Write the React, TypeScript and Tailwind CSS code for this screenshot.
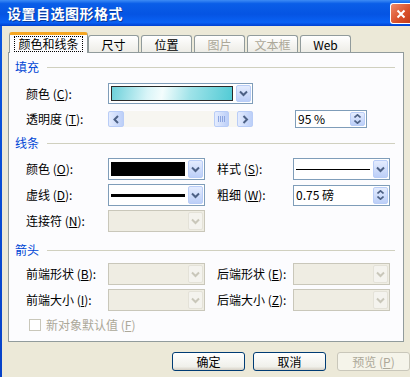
const font = "font-['SimSun','Noto_Sans_CJK_SC',sans-serif]";

function Chevron({ disabled, dir = 'down' }: { disabled?: boolean; dir?: 'down' | 'left' | 'right' }) {
  const d = dir === 'down' ? 'M1 1.5 L4.5 5 L8 1.5' : dir === 'left' ? 'M5 1 L1.5 4.5 L5 8' : 'M1.5 1 L5 4.5 L1.5 8';
  const size = dir === 'down' ? 'w-[9px] h-[7px]' : 'w-[7px] h-[9px]';
  return (
    <svg viewBox={dir === 'down' ? '0 0 9 7' : '0 0 7 9'} className={size}>
      <path d={d} fill="none" stroke={disabled ? '#c9c7ba' : '#4d6185'} strokeWidth="2" />
    </svg>
  );
}

function DropBtn({ disabled }: { disabled?: boolean }) {
  return (
    <div
      className={`w-[15px] self-stretch m-px rounded-[2px] flex items-center justify-center border ${
        disabled
          ? 'border-[#e4e2d8] bg-[#f4f3ee]'
          : 'border-[#b9cdf7] bg-[linear-gradient(180deg,#e4ecfe,#bccff8)]'
      }`}
    >
      <Chevron disabled={disabled} />
    </div>
  );
}

function SpinBtn() {
  return (
    <div className="w-[15px] self-stretch m-px rounded-[2px] flex flex-col items-center justify-center gap-[2px] border border-[#b9cdf7] bg-[linear-gradient(180deg,#e4ecfe,#bccff8)]">
      <svg viewBox="0 0 7 4" className="w-[7px] h-[4px]">
        <path d="M0.5 3.5 L3.5 0.8 L6.5 3.5" fill="none" stroke="#4d6185" strokeWidth="1.6" />
      </svg>
      <svg viewBox="0 0 7 4" className="w-[7px] h-[4px]">
        <path d="M0.5 0.5 L3.5 3.2 L6.5 0.5" fill="none" stroke="#4d6185" strokeWidth="1.6" />
      </svg>
    </div>
  );
}

function Label({ text, k, w = 'w-[82px]', disabled }: { text: string; k: string; w?: string; disabled?: boolean }) {
  return (
    <div className={`${w} shrink-0 text-[12px] leading-none whitespace-nowrap ${disabled ? 'text-[#aca899]' : 'text-black'}`}>
      {text} (<u>{k}</u>):
    </div>
  );
}

function Heading({ text }: { text: string }) {
  return (
    <div className="h-[14px] flex items-center pl-[6px] pr-[8px]">
      <span className="text-[12px] leading-none text-[#0046d5]">{text}</span>
      <div className="flex-1 h-px bg-[#d0d0bf] ml-[8px]" />
    </div>
  );
}

function Combo({ children, disabled }: { children?: React.ReactNode; disabled?: boolean }) {
  return (
    <div
      className={`w-[97px] h-[22px] flex border ${
        disabled ? 'border-[#c9c7ba] bg-[#efede3]' : 'border-[#7f9db9] bg-white'
      }`}
    >
      <div className="flex-1 flex items-center px-[2px]">{children}</div>
      <DropBtn disabled={disabled} />
    </div>
  );
}

function Tab({ text, active, disabled }: { text: string; active?: boolean; disabled?: boolean }) {
  if (active) {
    return (
      <div className="relative z-10 w-[79px] h-[21px] bg-[#fcfcfe] border-x border-[#919b9c] border-t-[3px] border-t-[#f5a623] rounded-t-[3px] flex items-start justify-center pt-[2px]">
        <span className="text-[12px] leading-none px-[3px] py-[1px] outline outline-1 outline-dotted outline-black">颜色和线条</span>
      </div>
    );
  }
  return (
    <div
      className={`w-[51px] h-[18px] border-x border-t border-[#919b9c] rounded-t-[3px] bg-[linear-gradient(180deg,#ffffff,#ecebe5)] flex items-center justify-center text-[12px] leading-none ${
        disabled ? 'text-[#aca899]' : 'text-black'
      }`}
    >
      {text}
    </div>
  );
}

function Button({ text, disabled }: { text: React.ReactNode; disabled?: boolean }) {
  return (
    <div
      className={`w-[73px] h-[19px] rounded-[3px] border flex items-center justify-center text-[12px] leading-none ${
        disabled
          ? 'border-[#c9c7ba] bg-[#f5f4ea] text-[#aca899]'
          : 'border-[#003c74] bg-[linear-gradient(180deg,#ffffff,#f0f0ea_80%,#d6d0c5)] text-black'
      }`}
    >
      {text}
    </div>
  );
}

export default function App() {
  return (
    <div className={`w-[410px] h-[377px] overflow-hidden bg-[#ece9d8] flex flex-col ${font}`}>
      {/* title bar */}
      <div className="h-[26px] shrink-0 flex items-center justify-between pl-[7px] bg-[linear-gradient(180deg,#3d8cf5_0%,#0a5ee8_14%,#0554e3_55%,#0a62f5_86%,#0040d0_100%)]">
        <span className="text-[14px] font-bold text-white leading-none tracking-[0.5px] [text-shadow:1px_1px_0_#0a3a9a]">
          设置自选图形格式
        </span>
        <div className="w-[20px] h-[21px] mt-[1px] rounded-l-[3px] border border-r-0 border-white bg-[linear-gradient(135deg,#f08a6a,#d9502a_60%,#c23c1a)] flex items-center justify-center">
          <svg viewBox="0 0 10 10" className="w-[10px] h-[10px]">
            <path d="M1.5 1.5 L8.5 8.5 M8.5 1.5 L1.5 8.5" stroke="white" strokeWidth="2" />
          </svg>
        </div>
      </div>

      <div className="flex-1 flex">
        <div className="w-[3px] bg-[linear-gradient(180deg,#0a56e0,#0842c8)]" />
        <div className="flex-1 flex flex-col pl-[6px] pt-[6px]">
          {/* tabs */}
          <div className="h-[21px] flex items-end pl-px gap-[2px]">
            <div className="-mr-[2px] self-stretch flex">
              <Tab text="颜色和线条" active />
            </div>
            <Tab text="尺寸" />
            <Tab text="位置" />
            <Tab text="图片" disabled />
            <Tab text="文本框" disabled />
            <Tab text="Web" />
          </div>

          {/* panel */}
          <div className="-mt-px w-[396px] h-[290px] border border-[#919b9c] bg-[#fcfcfe] flex flex-col pt-[7px]">
            <Heading text="填充" />
            <div className="mt-[9px] h-[21px] flex items-center pl-[17px]">
              <Label text="颜色" k="C" />
              <div className="w-[145px] h-[21px] flex border border-[#7f9db9] bg-white">
                <div className="flex-1 p-[2px]">
                  <div className="w-full h-full border border-[#2a2a2a] bg-[linear-gradient(100deg,#6cd0da_0%,#d9f5f8_30%,#f4fdfd_42%,#9fe3e9_65%,#52cbd5_100%)]" />
                </div>
                <DropBtn />
              </div>
            </div>
            <div className="mt-[6px] h-[18px] flex items-center pl-[17px]">
              <Label text="透明度" k="T" />
              <div className="w-[145px] h-[16px] flex items-stretch bg-[#f7f6f1]">
                <div className="w-[16px] rounded-[2px] border border-[#b9cdf7] bg-[linear-gradient(90deg,#e4ecfe,#bccff8)] flex items-center justify-center">
                  <Chevron dir="left" />
                </div>
                <div className="flex-1" />
                <div className="w-[15px] rounded-[2px] border border-[#b9cdf7] bg-[linear-gradient(90deg,#e4ecfe,#bccff8)] flex items-center justify-center gap-[1px]">
                  <div className="w-px h-[6px] bg-[#8ca5e0]" />
                  <div className="w-px h-[6px] bg-[#8ca5e0]" />
                  <div className="w-px h-[6px] bg-[#8ca5e0]" />
                  <div className="w-px h-[6px] bg-[#8ca5e0]" />
                </div>
                <div className="w-[8px]" />
                <div className="w-[16px] rounded-[2px] border border-[#b9cdf7] bg-[linear-gradient(90deg,#e4ecfe,#bccff8)] flex items-center justify-center">
                  <Chevron dir="right" />
                </div>
              </div>
              <div className="ml-[42px] w-[72px] h-[18px] flex border border-[#7f9db9] bg-white">
                <div className="flex-1 flex items-center pl-[2px] text-[12px] leading-none whitespace-pre">95 %</div>
                <SpinBtn />
              </div>
            </div>

            <div className="mt-[8px]">
              <Heading text="线条" />
            </div>
            <div className="mt-[8px] h-[22px] flex items-center pl-[17px]">
              <Label text="颜色" k="O" />
              <Combo>
                <div className="w-full h-[14px] bg-black" />
              </Combo>
              <div className="ml-[12px]">
                <Label text="样式" k="S" w="w-[76px]" />
              </div>
              <Combo>
                <div className="w-full h-px bg-black" />
              </Combo>
            </div>
            <div className="mt-[4px] h-[22px] flex items-center pl-[17px]">
              <Label text="虚线" k="D" />
              <Combo>
                <div className="w-full h-[3px] bg-black" />
              </Combo>
              <div className="ml-[12px]">
                <Label text="粗细" k="W" w="w-[76px]" />
              </div>
              <div className="w-[97px] h-[21px] flex border border-[#7f9db9] bg-white">
                <div className="flex-1 flex items-center pl-[2px] text-[12px] leading-none whitespace-pre">0.75 磅</div>
                <SpinBtn />
              </div>
            </div>
            <div className="mt-[4px] h-[22px] flex items-center pl-[17px]">
              <Label text="连接符" k="N" />
              <Combo disabled />
            </div>

            <div className="mt-[11px]">
              <Heading text="箭头" />
            </div>
            <div className="mt-[6px] h-[22px] flex items-center pl-[17px]">
              <Label text="前端形状" k="B" />
              <Combo disabled />
              <div className="ml-[12px]">
                <Label text="后端形状" k="E" w="w-[76px]" />
              </div>
              <Combo disabled />
            </div>
            <div className="mt-[4px] h-[22px] flex items-center pl-[17px]">
              <Label text="前端大小" k="I" />
              <Combo disabled />
              <div className="ml-[12px]">
                <Label text="后端大小" k="Z" w="w-[76px]" />
              </div>
              <Combo disabled />
            </div>
            <div className="mt-[7px] h-[14px] flex items-center pl-[20px] gap-[5px]">
              <div className="w-[12px] h-[12px] border border-[#c9c7ba] bg-white" />
              <span className="text-[12px] leading-none text-[#aca899]">
                新对象默认值 (<u>F</u>)
              </span>
            </div>
          </div>

          {/* buttons */}
          <div className="mt-[10px] flex pl-[164px]">
            <Button text="确定" />
            <div className="ml-[8px]">
              <Button text="取消" />
            </div>
            <div className="ml-[11px]">
              <Button text={<>预览 (<u>P</u>)</>} disabled />
            </div>
          </div>
        </div>
      </div>
    </div>
  );
}
